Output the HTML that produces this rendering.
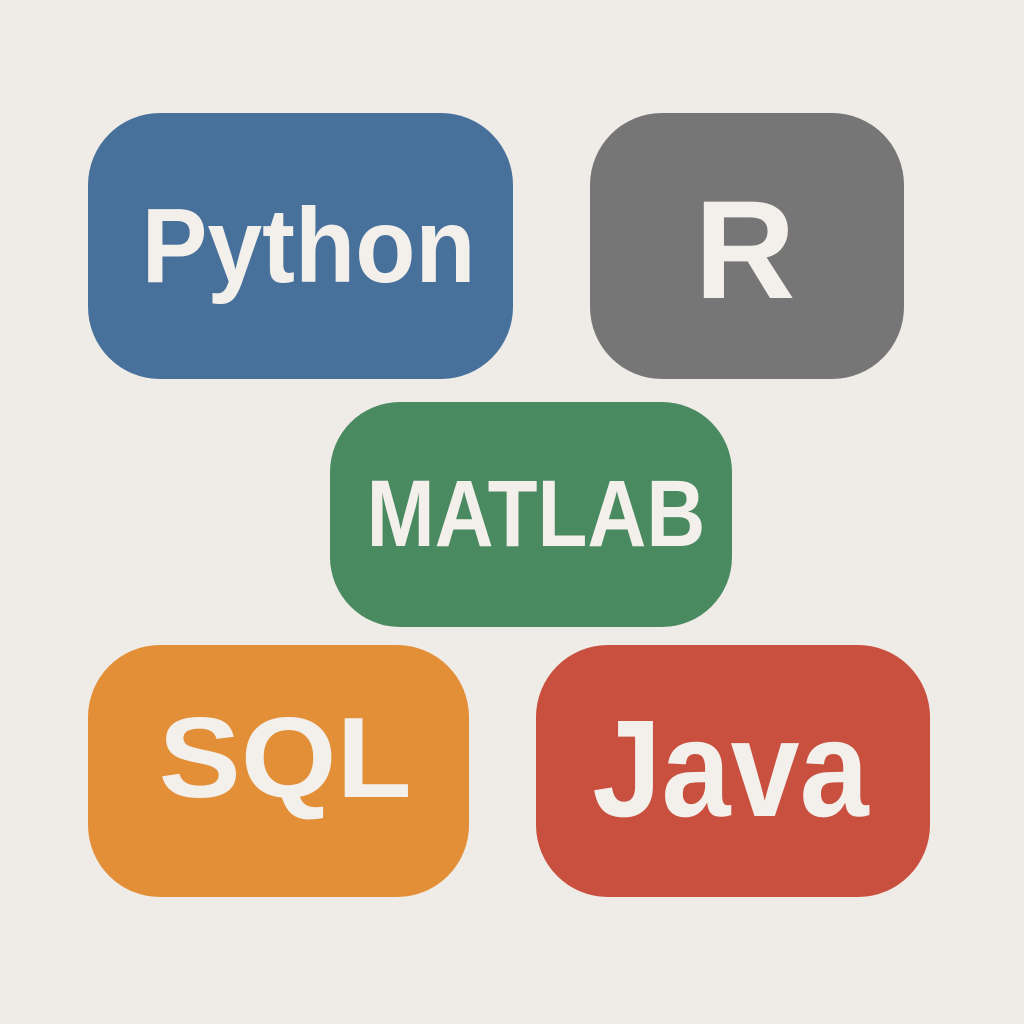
<!DOCTYPE html>
<html><head><meta charset="utf-8"><style>
body{margin:0;width:1024px;height:1024px;background:#efebe7;position:relative;overflow:hidden;font-family:"Liberation Sans",sans-serif;}
.b{position:absolute;display:flex;align-items:center;justify-content:center;color:#f3efeb;font-weight:bold;line-height:1;}
.b span{display:inline-block;white-space:nowrap;}
</style></head><body>
<div class="b" style="left:88px;top:113px;width:425px;height:266px;border-radius:72px;background:#47719b;font-size:106px;"><span style="transform:translate(8px,0px) scaleX(0.93)">Python</span></div>
<div class="b" style="left:590px;top:113px;width:314px;height:266px;border-radius:72px;background:#767676;font-size:140px;"><span style="transform:translate(-2px,4px)">R</span></div>
<div class="b" style="left:330px;top:402px;width:402px;height:225px;border-radius:70px;background:#4a8a60;font-size:95px;"><span style="transform:translate(5px,0px) scaleX(0.86)">MATLAB</span></div>
<div class="b" style="left:88px;top:645px;width:381px;height:252px;border-radius:72px;background:#e28f38;font-size:114px;"><span style="transform:translate(7px,-12px) scaleX(1.08)">SQL</span></div>
<div class="b" style="left:536px;top:645px;width:394px;height:252px;border-radius:72px;background:#c9503f;font-size:138px;"><span style="transform:translate(-3px,-2px) scaleX(0.9)">Java</span></div>
</body></html>
